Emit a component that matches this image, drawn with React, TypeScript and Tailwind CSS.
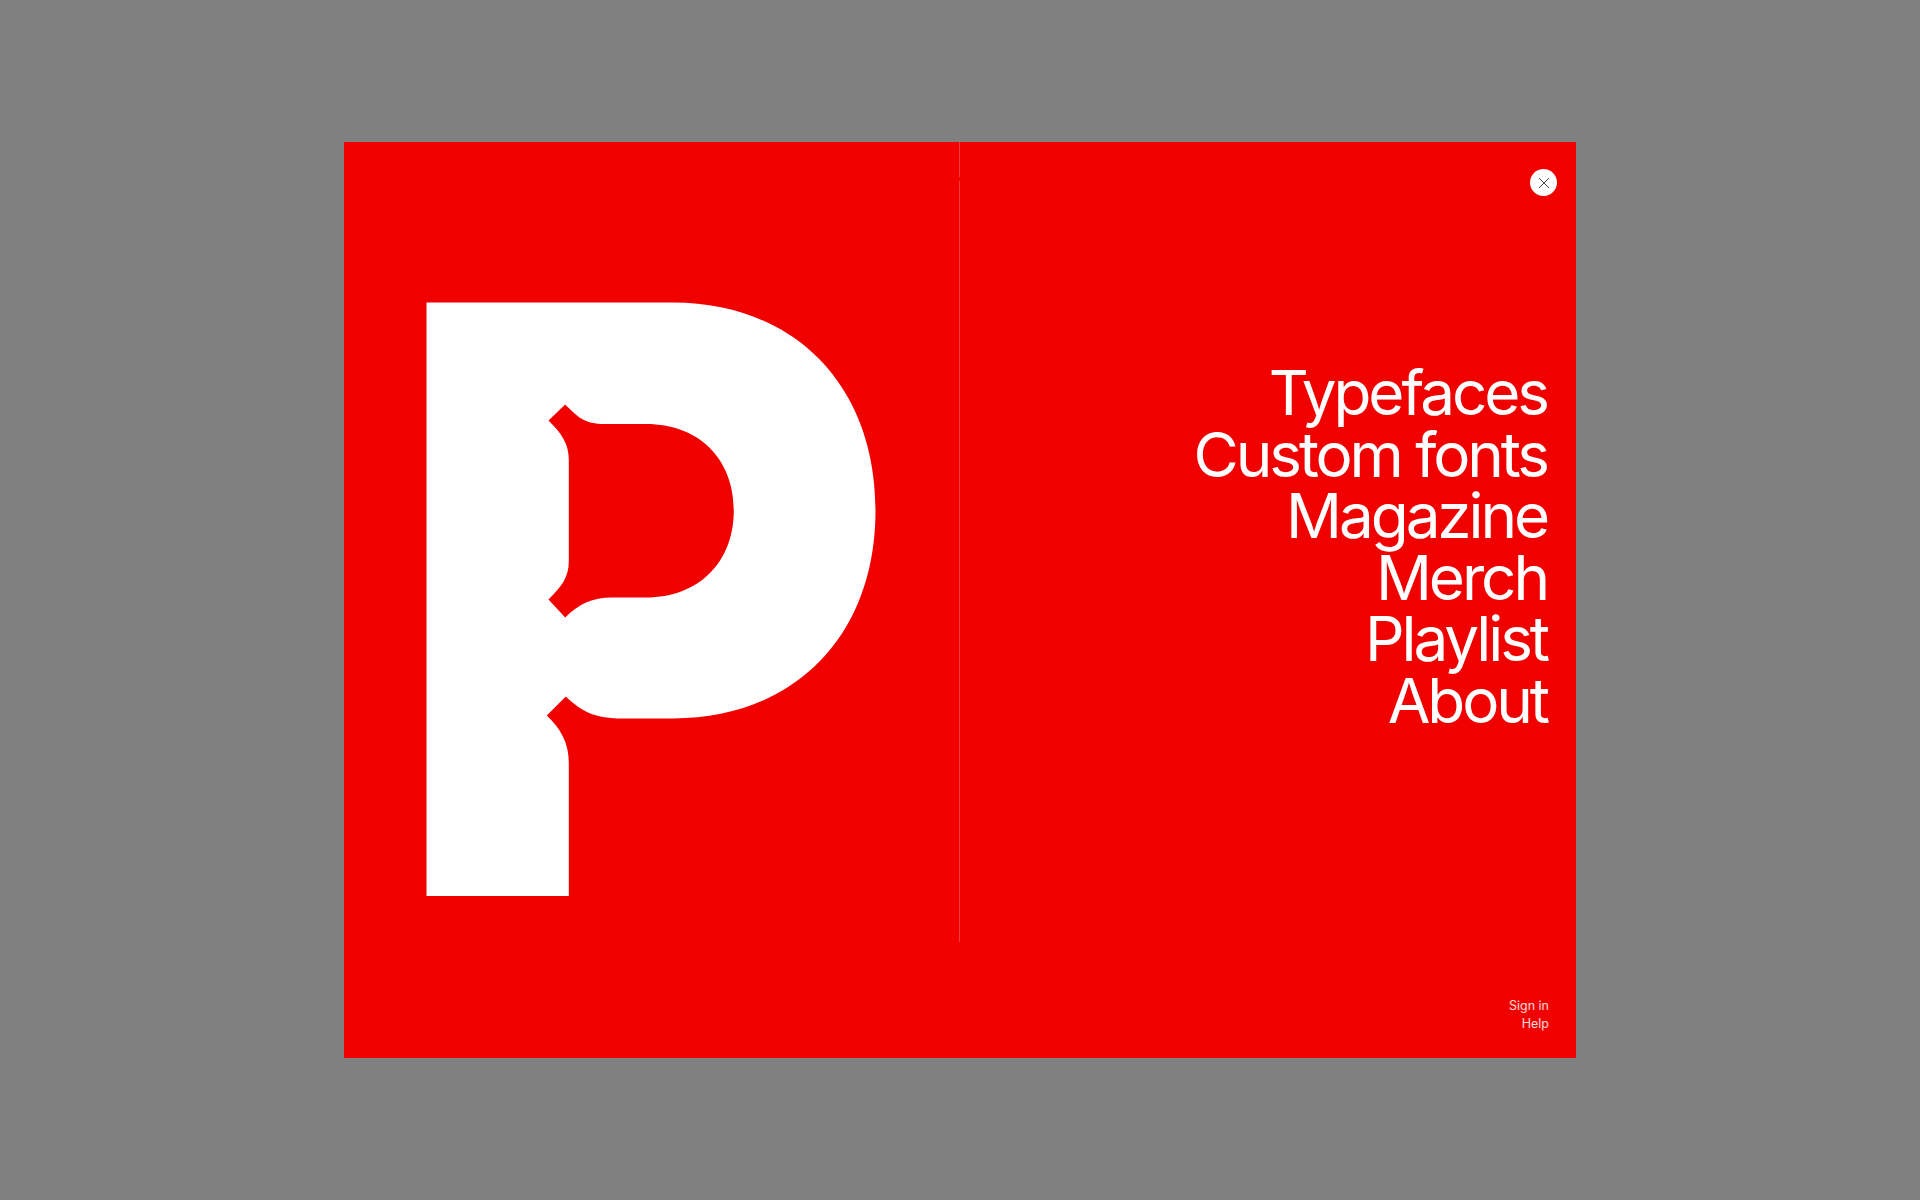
const navItems = ['Typefaces', 'Custom fonts', 'Magazine', 'Merch', 'Playlist', 'About'];

export default function App() {
  return (
    <div className="h-[1200px] w-full bg-[#808080] flex items-center justify-center font-['Inter','Liberation_Sans',Arial,sans-serif]">
      <div className="relative w-[1232px] h-[916px] bg-[#f10000] flex text-white">
        {/* thin divider */}
        <div className="absolute left-[615px] top-0 w-px h-[35px] bg-[#ff3b3b]" />
        <div className="absolute left-[615px] top-[39px] w-px h-[761px] bg-[#ff3b3b]" />

        {/* left half, logo */}
        <div className="w-[616px] pl-[82px] pt-[160px] shrink-0">
          <svg width="450" height="594" viewBox="426.5 302.5 450 594" className="block">
            <path
              fill="#ffffff"
              fillRule="evenodd"
              d="M427 303 H673 C795 303 876 386 876 511 C876 636 795 719 673 719 H624 C595 719 582 712 566.3 697 L547.3 716 C561 729 569.3 743 569.3 763 V896.5 H427 Z M565.7 405 L549 421 C562 434 569.3 444 569.3 460 V561.7 C569.3 578 562 587 549 600 L565.7 618 C580 604 593 598 612 598 H646.6 C699 598 734.3 563 734.3 511 C734.3 459 699 424.5 646.6 424.5 H606 C584 424.5 578 417 565.7 405 Z"
            />
          </svg>
        </div>

        {/* right half, menu */}
        <div className="flex-1 flex flex-col items-end justify-between pr-[27px] pt-[220px] pb-[25px]">
          <nav className="flex flex-col items-end mr-[2px] font-normal text-[62px] leading-[61.6px] tracking-[-3.1px]">
            {navItems.map((item) => (
              <a key={item}>{item}</a>
            ))}
          </nav>
          <div className="flex flex-col items-end font-normal text-[12.5px] leading-[18px] text-white/85">
            <a>Sign in</a>
            <a>Help</a>
          </div>
        </div>

        {/* close button */}
        <button className="absolute left-[1186px] top-[27px] w-[27px] h-[27px] rounded-full bg-white flex items-center justify-center">
          <svg width="12" height="12" viewBox="0 0 12 12" fill="none" stroke="#4a4a4a" strokeWidth="1">
            <path d="M1 1 L11 11 M11 1 L1 11" />
          </svg>
        </button>
      </div>
    </div>
  );
}
